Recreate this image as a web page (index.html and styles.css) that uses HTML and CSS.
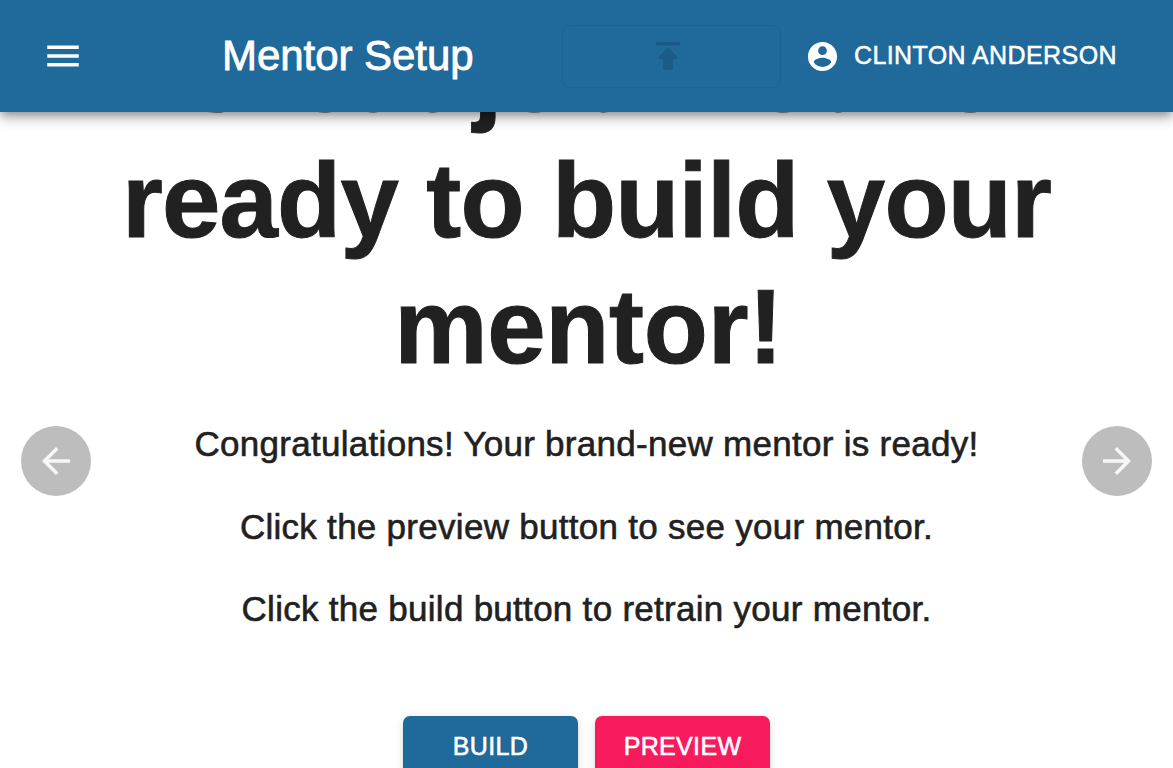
FILE: index.html
```html
<!DOCTYPE html>
<html lang="en">
<head>
<meta charset="utf-8">
<title>Mentor Setup</title>
<link rel="stylesheet" href="styles.css">
</head>
<body>
<header class="app-bar">
  <button class="menu-button" aria-label="Menu"><svg viewBox="0 0 24 24"><path d="M3 18h18v-2H3v2zm0-5h18v-2H3v2zm0-7v2h18V6H3z"/></svg></button>
  <div class="app-title">Mentor Setup</div>
  <button class="publish-button" aria-label="Publish" disabled><svg viewBox="0 0 26 30"><path d="M2.5 1h21a1.8 1.8 0 0 1 0 3.6h-21a1.8 1.8 0 0 1 0-3.6zM14 7.4l8.2 8.2c1 1.1.5 2.7-.9 2.7H18v9.2c0 1-.5 1.5-1.5 1.5h-7c-1 0-1.5-.5-1.5-1.5v-9.2H4.7c-1.4 0-1.9-1.6-.9-2.7L12 7.4c.6-.6 1.4-.6 2 0z"/></svg></button>
  <button class="user-button"><svg viewBox="0 0 24 24"><path d="M12 2C6.48 2 2 6.48 2 12s4.48 10 10 10 10-4.48 10-10S17.52 2 12 2zm0 3c1.66 0 3 1.34 3 3s-1.34 3-3 3-3-1.34-3-3 1.34-3 3-3zm0 14.2c-2.5 0-4.71-1.28-6-3.22.03-1.99 4-3.08 6-3.08 1.99 0 5.97 1.09 6 3.08-1.29 1.94-3.5 3.22-6 3.22z"/></svg><span>CLINTON ANDERSON</span></button>
</header>
<main class="setup">
  <button class="nav-button" aria-label="Back"><svg viewBox="0 0 24 24"><path d="M20 11H7.83l5.59-5.59L12 4l-8 8 8 8 1.41-1.41L7.83 13H20v-2z"/></svg></button>
  <section class="slide">
    <h1 class="heading"><span>Great job! You're</span><span>ready to build your</span><span class="heading-end">mentor!</span></h1>
    <p class="line">Congratulations! Your brand-new mentor is ready!</p>
    <p class="line">Click the preview button to see your mentor.</p>
    <p class="line">Click the build button to retrain your mentor.</p>
    <div class="actions">
      <button class="action build">BUILD</button>
      <button class="action preview">PREVIEW</button>
    </div>
  </section>
  <button class="nav-button" aria-label="Next"><svg viewBox="0 0 24 24"><path d="M12 4l-1.41 1.41L16.17 11H4v2h12.17l-5.58 5.59L12 20l8-8z"/></svg></button>
</main>
</body>
</html>
```
FILE: styles.css
```css
* { box-sizing: border-box; }
body { margin: 0; height: 768px; overflow: hidden; background: #fff; color: #212121; font-family: "Liberation Sans", Arial, sans-serif; }
button { border: 0; padding: 0; background: none; color: #fff; font: inherit; }
svg { display: block; fill: currentColor; }
.app-bar { position: relative; z-index: 1; display: flex; align-items: center; height: 112px; background: #20699b; color: #fff; box-shadow: 0 4px 8px -2px rgba(0,0,0,.3), 0 8px 10px rgba(0,0,0,.14), 0 2px 18px rgba(0,0,0,.12); }
.menu-button { margin-left: 42px; }
.menu-button svg { width: 42px; height: 42px; }
.app-title { margin-left: 138px; width: 340px; font-size: 42px; line-height: 56px; letter-spacing: -.05px; white-space: nowrap; -webkit-text-stroke: .8px #fff; }
.publish-button { display: flex; align-items: center; justify-content: center; width: 219px; height: 63px; padding-right: 7px; border: 1px solid rgba(0,0,0,.06); border-radius: 8px; color: #1c5b87; }
.publish-button svg { width: 26px; height: 30px; }
.user-button { display: flex; align-items: center; margin-left: 24px; gap: 14px; font-size: 25px; letter-spacing: .4px; white-space: nowrap; -webkit-text-stroke: .5px #fff; }
.user-button svg { width: 35px; height: 35px; stroke: none; }
.user-button span { padding-bottom: 2px; }
.setup { display: flex; height: 656px; justify-content: space-between; padding: 0 21px; }
.nav-button { display: flex; align-items: center; justify-content: center; width: 70px; height: 70px; margin-top: 314px; border-radius: 50%; background: #bdbdbd; color: #f7f7f7; }
.nav-button svg { width: 42px; height: 42px; }
.slide { width: 960px; margin-top: -100px; text-align: center; }
.heading { margin: 0 0 29px; font-size: 105px; line-height: 126px; letter-spacing: -.85px; white-space: nowrap; -webkit-text-stroke: 1px #212121; }
.heading span { display: block; }
.heading .heading-end { padding-left: 4px; letter-spacing: -.3px; }
.line { margin: 0 0 32.5px; font-size: 35px; line-height: 50px; letter-spacing: .28px; white-space: nowrap; -webkit-text-stroke: .6px #212121; }
.actions { display: flex; justify-content: center; gap: 17px; margin-top: 82px; }
.action { width: 175px; height: 63px; padding-bottom: 2px; border-radius: 7px; font-size: 25px; letter-spacing: .35px; -webkit-text-stroke: .6px #fff; box-shadow: 0 5px 4px -2px rgba(0,0,0,.2), 0 2px 9px rgba(0,0,0,.14); }
.build { background: #20699b; }
.preview { background: #f71a5c; }
```
